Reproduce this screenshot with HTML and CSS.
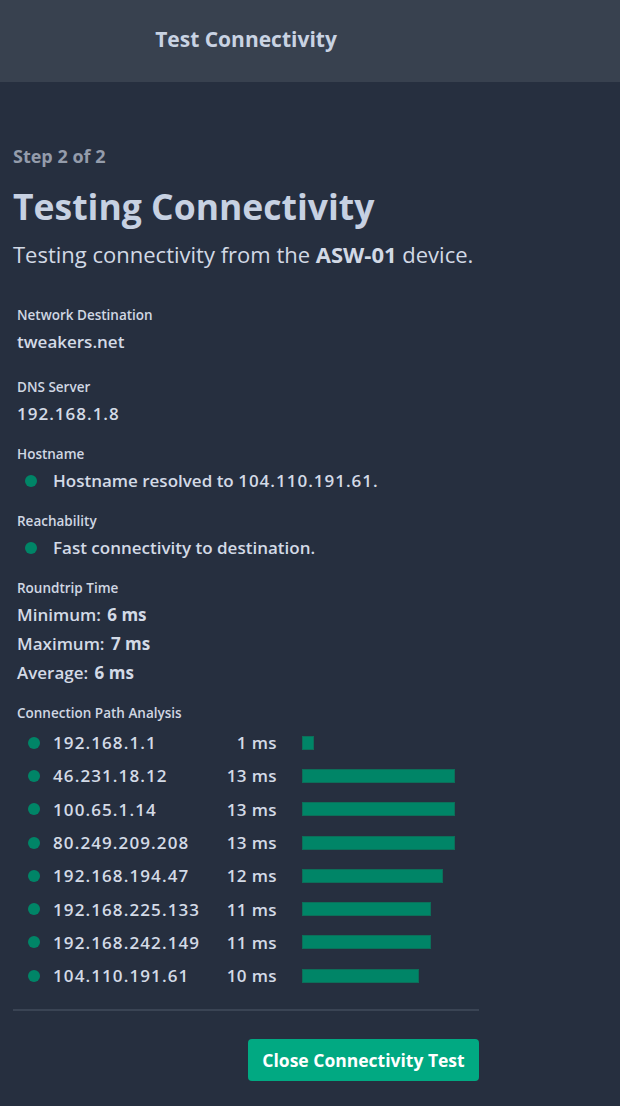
FILE: index.html
```html
<!DOCTYPE html>
<html lang="en">
<head>
<meta charset="utf-8">
<title>Test Connectivity</title>
<link rel="stylesheet" href="styles.css">
</head>
<body>
<header class="topbar">
  <div class="topbar-inner">Test Connectivity</div>
</header>
<main class="content">
  <div class="step">Step 2 of 2</div>
  <h1 class="title">Testing Connectivity</h1>
  <p class="subtitle">Testing connectivity from the <strong>ASW-01</strong> device.</p>

  <section class="fields">
    <div class="field field-first">
      <div class="label">Network Destination</div>
      <div class="value">tweakers.net</div>
    </div>
    <div class="field">
      <div class="label">DNS Server</div>
      <div class="value"><span class="num">192.168.1.8</span></div>
    </div>
    <div class="field">
      <div class="label">Hostname</div>
      <div class="value status"><span class="dot"></span><span>Hostname resolved to <span class="num">104.110.191.61.</span></span></div>
    </div>
    <div class="field">
      <div class="label">Reachability</div>
      <div class="value status"><span class="dot"></span><span>Fast connectivity to destination.</span></div>
    </div>
    <div class="field field-rtt">
      <div class="label">Roundtrip Time</div>
      <div class="stat"><span class="stat-name">Minimum:</span> <strong>6 ms</strong></div>
      <div class="stat"><span class="stat-name">Maximum:</span> <strong>7 ms</strong></div>
      <div class="stat"><span class="stat-name">Average:</span> <strong>6 ms</strong></div>
    </div>
    <div class="field field-path">
      <div class="label">Connection Path Analysis</div>
      <div class="hops">
        <div class="hop"><span class="dot"></span><span class="ip">192.168.1.1</span><span class="ms">1 ms</span><span class="bar-track"><span class="bar" style="width:12px"></span></span></div>
        <div class="hop"><span class="dot"></span><span class="ip">46.231.18.12</span><span class="ms">13 ms</span><span class="bar-track"><span class="bar" style="width:153px"></span></span></div>
        <div class="hop"><span class="dot"></span><span class="ip">100.65.1.14</span><span class="ms">13 ms</span><span class="bar-track"><span class="bar" style="width:153px"></span></span></div>
        <div class="hop"><span class="dot"></span><span class="ip">80.249.209.208</span><span class="ms">13 ms</span><span class="bar-track"><span class="bar" style="width:153px"></span></span></div>
        <div class="hop"><span class="dot"></span><span class="ip">192.168.194.47</span><span class="ms">12 ms</span><span class="bar-track"><span class="bar" style="width:141px"></span></span></div>
        <div class="hop"><span class="dot"></span><span class="ip">192.168.225.133</span><span class="ms">11 ms</span><span class="bar-track"><span class="bar" style="width:129px"></span></span></div>
        <div class="hop"><span class="dot"></span><span class="ip">192.168.242.149</span><span class="ms">11 ms</span><span class="bar-track"><span class="bar" style="width:129px"></span></span></div>
        <div class="hop"><span class="dot"></span><span class="ip">104.110.191.61</span><span class="ms">10 ms</span><span class="bar-track"><span class="bar" style="width:117px"></span></span></div>
      </div>
    </div>
  </section>

  <footer class="actions">
    <button class="btn-primary" type="button">Close Connectivity Test</button>
  </footer>
</main>
</body>
</html>
```

FILE: styles.css
```css
* { box-sizing: border-box; }

html, body {
  margin: 0;
  padding: 0;
  background: #262f3f;
  font-family: "Open Sans", "Lato", sans-serif;
  color: #cdd5e2;
}

.topbar {
  height: 82px;
  background: #38414f;
  display: flex;
  align-items: center;
}

.topbar-inner {
  width: 466px;
  margin-left: 13px;
  text-align: center;
  font-size: 21px;
  line-height: 26px;
  font-weight: 700;
  color: #c9d3e3;
  padding-bottom: 4px;
}

.content {
  width: 466px;
  margin-left: 13px;
  padding-top: 62px;
}

.step {
  font-size: 18px;
  line-height: 24px;
  font-weight: 700;
  color: #949cab;
}

.title {
  margin: 16px 0 0;
  font-size: 35.5px;
  line-height: 44px;
  font-weight: 700;
  color: #c7d1e2;
}

.subtitle {
  margin: 12px 0 0;
  font-size: 22px;
  line-height: 28px;
  font-weight: 400;
  color: #d2d9e5;
}

.subtitle strong { font-weight: 700; }

.fields {
  margin-top: 37px;
  padding-left: 4px;
  display: flex;
  flex-direction: column;
  gap: 17px;
}

.field-first .value { margin-bottom: 5px; }

.label {
  font-size: 13.5px;
  line-height: 20px;
  font-weight: 600;
  color: #d0d7e3;
}

.value {
  margin-top: 4px;
  font-size: 17px;
  line-height: 26px;
  font-weight: 600;
  color: #d3dae6;
}

.num { letter-spacing: 1px; }

.status {
  display: flex;
  align-items: center;
  padding-left: 8px;
}

.dot {
  width: 12px;
  height: 12px;
  border-radius: 50%;
  background: #008567;
  flex: none;
}

.status .dot { margin-right: 16px; }

.field-rtt .label { margin-bottom: 2px; }

.stat {
  font-size: 17px;
  line-height: 29px;
  font-weight: 600;
  color: #d3dae6;
}

.stat strong { font-weight: 700; margin-left: 2px; }

.field-path { margin-top: -1px; }

.hops {
  margin-top: 3px;
}

.hop {
  display: grid;
  grid-template-columns: 12px 173px 53px 1fr;
  column-gap: 12px;
  align-items: center;
  height: 33.3px;
  padding-left: 11px;
  font-size: 17px;
  font-weight: 600;
  color: #d3dae6;
}

.hop .ip {
  margin-left: 1px;
  letter-spacing: 1.1px;
}

.hop .ms {
  text-align: right;
  margin-left: -12px;
  margin-right: 13px;
  letter-spacing: 0.4px;
}

.bar-track { display: flex; }

.bar {
  display: block;
  height: 14px;
  background: #008567;
  border: 1px solid #0c6f59;
}

.actions {
  margin-top: 17px;
  border-top: 2px solid #3a4454;
  padding-top: 28px;
  display: flex;
  justify-content: flex-end;
}

.btn-primary {
  height: 42px;
  padding: 0 8px;
  border: none;
  border-radius: 4px;
  background: #01a982;
  color: #ffffff;
  font-family: inherit;
  font-size: 17.5px;
  font-weight: 700;
  width: 231px;
}
```
